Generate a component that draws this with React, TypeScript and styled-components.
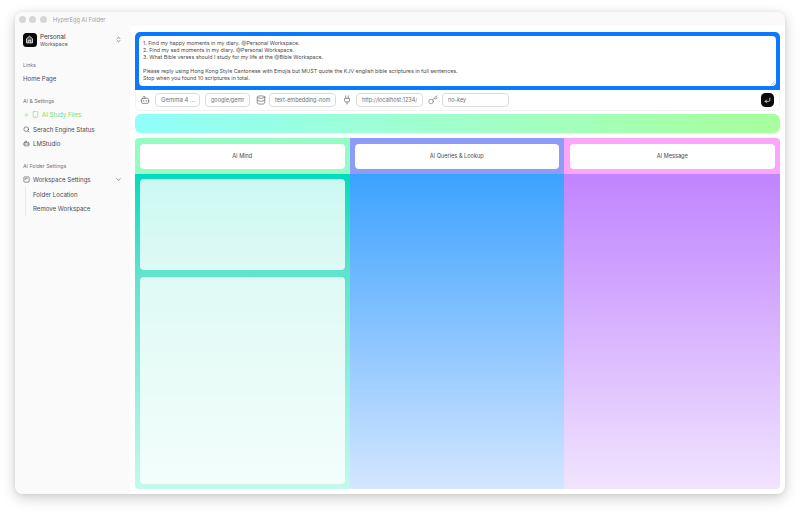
import styled, { createGlobalStyle } from 'styled-components';
import {
  ArrowRight,
  Bot,
  ChevronDown,
  ChevronsUpDown,
  CornerDownLeft,
  Database,
  Key,
  Plug,
  Search,
  Tablet,
} from 'lucide-react';

const GlobalStyle = createGlobalStyle`
  html, body {
    margin: 0;
    padding: 0;
    background: #fff;
  }
  body {
    font-family: "Inter", "Liberation Sans", sans-serif;
    color: #3f3f46;
  }
  * { box-sizing: border-box; }
`;

const Page = styled.div`
  width: 800px;
  height: 513px;
  padding: 12px 15px 19px;
  overflow: hidden;
`;

const Window = styled.div`
  height: 482px;
  border-radius: 8px;
  background: #fff;
  box-shadow: 0 4px 14px rgba(0, 0, 0, 0.2), 0 0 4px rgba(0, 0, 0, 0.07);
  display: flex;
  flex-direction: column;
  overflow: hidden;
`;

const TitleBar = styled.div`
  height: 14px;
  display: flex;
  align-items: center;
  padding-left: 3.5px;
  gap: 3.5px;
  background: #fafafa;
`;

const Dot = styled.span`
  width: 7px;
  height: 7px;
  border-radius: 50%;
  background: #d6d6d6;
`;

const Title = styled.span`
  margin-left: 3px;
  font-size: 5.7px;
  color: #a0a0a0;
`;

const Body = styled.div`
  flex: 1;
  min-height: 0;
  display: flex;
`;

const Sidebar = styled.aside`
  width: 115px;
  background: #fafafa;
  padding: 6.5px 7px 0;
  display: flex;
  flex-direction: column;
`;

const Account = styled.div`
  display: flex;
  align-items: center;
  height: 14px;
  margin-bottom: 3px;
  padding-left: 0.5px;
`;

const Logo = styled.div`
  width: 14px;
  height: 14px;
  border-radius: 3.5px;
  background: #0a0a0a;
  color: #e5e5e5;
  display: flex;
  align-items: center;
  justify-content: center;
`;

const AccountText = styled.div`
  margin-left: 3.5px;
  padding-top: 1.5px;
  flex: 1;
  display: flex;
  flex-direction: column;
`;

const AccountName = styled.span`
  font-size: 6.2px;
  line-height: 7.5px;
  color: #333;
`;

const AccountSub = styled.span`
  font-size: 5.2px;
  line-height: 7px;
  color: #555;
`;

const Stepper = styled.span`
  color: #444;
  display: flex;
  margin-right: 1px;
`;

const GroupLabel = styled.div`
  font-size: 5.2px;
  color: #71717a;
  height: 14px;
  line-height: 14px;
  margin-top: 8px;
  padding-left: 1px;
`;

const MenuRow = styled.div<{ $active?: boolean }>`
  height: 14.3px;
  display: flex;
  align-items: center;
  gap: 3px;
  padding-left: 1px;
  font-size: 6.1px;
  color: ${({ $active }) => ($active ? '#7bdc6a' : '#4b4b52')};
`;

const MenuSpacer = styled.span`
  flex: 1;
`;

const SubList = styled.div`
  margin-left: 3px;
  padding-left: 7px;
  border-left: 1px solid #e9e9e9;
`;

const SubItem = styled.div`
  height: 14.3px;
  display: flex;
  align-items: center;
  font-size: 6.1px;
  color: #4b4b52;
`;

const Main = styled.main`
  flex: 1;
  min-width: 0;
  padding: 6px 5px 5px;
  display: flex;
  flex-direction: column;
`;

const PromptFrame = styled.div`
  background: #0a78ff;
  border-radius: 5px 5px 0 0;
  padding: 4px;
`;

const Prompt = styled.div`
  position: relative;
  height: 50px;
  background: #fff;
  border-radius: 4px;
  padding: 4px;
  font-size: 5.3px;
  line-height: 7.1px;
  color: #4a4a4a;
  white-space: pre;
`;

const Grip = styled.svg`
  position: absolute;
  right: 1px;
  bottom: 1px;
`;

const Toolbar = styled.div`
  height: 21px;
  display: flex;
  align-items: center;
  padding: 0 5px 0 4px;
  color: #555;
  border: 1px solid #f3f3f3;
  border-top: 0;
  border-radius: 0 0 5px 5px;
`;

const Field = styled.div<{ $width: number; $gap?: number; $size?: number }>`
  width: ${({ $width }) => $width}px;
  margin-left: ${({ $gap }) => $gap ?? 4}px;
  height: 14px;
  border: 1px solid #dcdcdc;
  border-radius: 4px;
  padding-left: 5px;
  font-size: ${({ $size }) => $size ?? 5.5}px;
  line-height: 12px;
  color: #707070;
  white-space: nowrap;
  overflow: hidden;
`;

const ToolIcon = styled.span<{ $gap?: number }>`
  margin-left: ${({ $gap }) => $gap ?? 5}px;
  display: flex;
  &:first-child { margin-left: 0; }
`;

const SendButton = styled.button`
  margin-left: auto;
  width: 13px;
  height: 14px;
  border: 0;
  padding: 0;
  border-radius: 4.5px;
  background: #0a0a0a;
  color: #d8d8d8;
  display: flex;
  align-items: center;
  justify-content: center;
`;

const Progress = styled.div`
  height: 19px;
  margin-top: 3px;
  border-radius: 6px;
  background: linear-gradient(100deg, #90fffa 0%, #a0ffcf 45%, #a8ff9c 100%);
`;

const Board = styled.div`
  flex: 1;
  min-height: 0;
  margin-top: 5px;
  border-radius: 4px;
  overflow: hidden;
  display: grid;
  grid-template-columns: 215px 214px 216px;
`;

const Column = styled.div`
  display: flex;
  flex-direction: column;
  min-height: 0;
`;

const ColumnHead = styled.div<{ $color: string; $inset?: number }>`
  height: 36px;
  flex: none;
  padding: 5.5px 5.5px 5.5px ${({ $inset }) => $inset ?? 5}px;
  background: ${({ $color }) => $color};
`;

const HeadCard = styled.div`
  height: 25px;
  border-radius: 4px;
  background: #fff;
  display: flex;
  align-items: center;
  justify-content: center;
  font-size: 5.6px;
  color: #4a4a4a;
`;

const ColumnBody = styled.div<{ $from: string; $to: string }>`
  flex: 1;
  min-height: 0;
  background: linear-gradient(180deg, ${({ $from }) => $from}, ${({ $to }) => $to});
`;

const MindBody = styled.div`
  flex: 1;
  min-height: 0;
  padding: 5px 5.5px 5px 5px;
  display: flex;
  flex-direction: column;
  gap: 6.5px;
  background: linear-gradient(180deg, #00dcbc 0%, #5fe3cb 31%, #c4f9ec 100%);
`;

const MindCard = styled.div<{ $grow?: boolean }>`
  flex: ${({ $grow }) => ($grow ? 1 : '0 0 91px')};
  border-radius: 4px;
  background: rgba(255, 255, 255, 0.8);
`;

const prompt = `1. Find my happy moments in my diary. @Personal Workspace.
2. Find my sad moments in my diary. @Personal Workspace.
3. What Bible verses should I study for my life at the @Bible Workspace.

Please reply using Hong Kong Style Cantonese with Emojis but MUST quote the KJV english bible scriptures in full sentences.
Stop when you found 10 scriptures in total.`;

export default function App() {
  return (
    <>
      <GlobalStyle />
      <Page>
        <Window>
          <TitleBar>
            <Dot />
            <Dot />
            <Dot />
            <Title>HyperEgg AI Folder</Title>
          </TitleBar>
          <Body>
            <Sidebar>
              <Account>
                <Logo>
                  <svg width="9" height="9" viewBox="0 0 24 24" fill="none" stroke="currentColor" strokeWidth="2.4">
                    <path d="M4 21V10l8-7 8 7v11z" fill="currentColor" fillOpacity="0.35" />
                    <path d="M9 21v-7h6v7" />
                  </svg>
                </Logo>
                <AccountText>
                  <AccountName>Personal</AccountName>
                  <AccountSub>Workspace</AccountSub>
                </AccountText>
                <Stepper>
                  <ChevronsUpDown size={7} />
                </Stepper>
              </Account>
              <GroupLabel>Links</GroupLabel>
              <MenuRow>Home Page</MenuRow>
              <GroupLabel>AI &amp; Settings</GroupLabel>
              <MenuRow $active>
                <ArrowRight size={6} />
                <Tablet size={7} />
                <span>AI Study Files</span>
              </MenuRow>
              <MenuRow>
                <Search size={7} />
                <span>Serach Engine Status</span>
              </MenuRow>
              <MenuRow>
                <Bot size={7} />
                <span>LMStudio</span>
              </MenuRow>
              <GroupLabel>AI Folder Settings</GroupLabel>
              <MenuRow>
                <svg width="7" height="7" viewBox="0 0 24 24" fill="none" stroke="currentColor" strokeWidth="2">
                  <rect x="3" y="3" width="18" height="18" rx="2" />
                  <path d="M8 8h8M8 8v6" />
                </svg>
                <span>Workspace Settings</span>
                <MenuSpacer />
                <Stepper>
                  <ChevronDown size={7} />
                </Stepper>
              </MenuRow>
              <SubList>
                <SubItem>Folder Location</SubItem>
                <SubItem>Remove Workspace</SubItem>
              </SubList>
            </Sidebar>
            <Main>
              <PromptFrame>
                <Prompt>
                  {prompt}
                  <Grip width="4" height="4" viewBox="0 0 4 4" stroke="#999" strokeWidth="0.5">
                    <path d="M0 4l4-4M2 4l2-2" />
                  </Grip>
                </Prompt>
              </PromptFrame>
              <Toolbar>
                <ToolIcon>
                  <Bot size={10} strokeWidth={1.5} />
                </ToolIcon>
                <Field $width={45} $gap={5} $size={6}>Gemma 4 ...</Field>
                <Field $width={45} $gap={5}>google/gemr</Field>
                <ToolIcon $gap={6}>
                  <Database size={10} strokeWidth={1.5} />
                </ToolIcon>
                <Field $width={67} $gap={3}>text-embedding-nom</Field>
                <ToolIcon $gap={6}>
                  <Plug size={10} strokeWidth={1.5} />
                </ToolIcon>
                <Field $width={67}>http://localhost:1234/</Field>
                <ToolIcon>
                  <Key size={10} strokeWidth={1.3} />
                </ToolIcon>
                <Field $width={67}>no-key</Field>
                <SendButton aria-label="Send">
                  <CornerDownLeft size={7} strokeWidth={3} />
                </SendButton>
              </Toolbar>
              <Progress />
              <Board>
                <Column>
                  <ColumnHead $color="#94fdc4">
                    <HeadCard>AI Mind</HeadCard>
                  </ColumnHead>
                  <MindBody>
                    <MindCard />
                    <MindCard $grow />
                  </MindBody>
                </Column>
                <Column>
                  <ColumnHead $color="#8c9cf8">
                    <HeadCard>AI Queries &amp; Lookup</HeadCard>
                  </ColumnHead>
                  <ColumnBody $from="#3ca2ff" $to="#d4e6ff" />
                </Column>
                <Column>
                  <ColumnHead $color="#fba6fb" $inset={6}>
                    <HeadCard>AI Message</HeadCard>
                  </ColumnHead>
                  <ColumnBody $from="#c084ff" $to="#f1e4fe" />
                </Column>
              </Board>
            </Main>
          </Body>
        </Window>
      </Page>
    </>
  );
}
